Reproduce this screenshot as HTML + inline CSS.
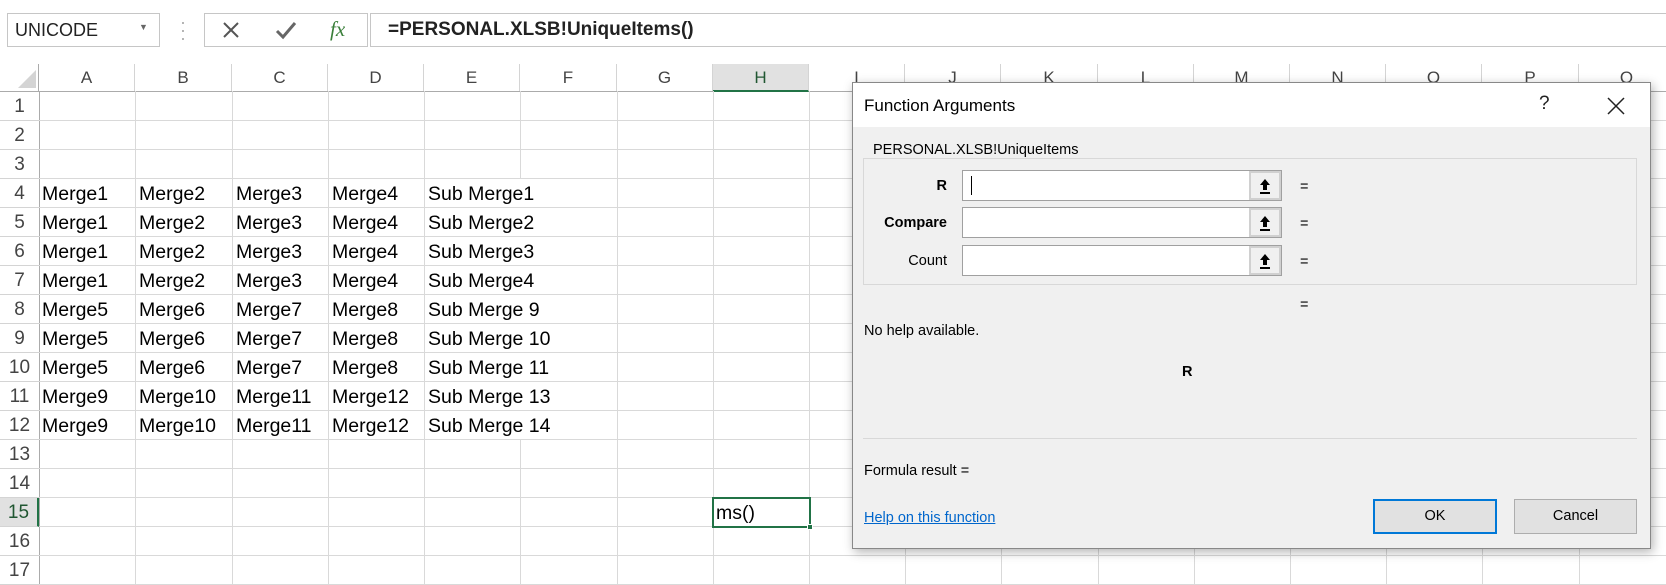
<!DOCTYPE html>
<html><head><meta charset="utf-8"><style>
*{margin:0;padding:0;box-sizing:border-box}
body{width:1666px;height:585px;overflow:hidden;background:#fff;font-family:"Liberation Sans",sans-serif;position:relative}
.a{position:absolute}
.ch{position:absolute;top:64px;height:27px;text-align:center;font-size:17px;color:#444;line-height:27px;border-right:1px solid #d4d4d4}
.rh{position:absolute;left:0;width:39px;text-align:center;font-size:19px;color:#444;border-bottom:1px solid #d4d4d4;line-height:29px}
.vl{position:absolute;top:91px;height:494px;width:1px;background:#d9d9d9}
.hl{position:absolute;left:39px;width:1627px;height:1px;background:#d9d9d9}
.c{position:absolute;font-size:19.5px;color:#000;line-height:30px;white-space:nowrap}
.d{font-size:14.5px;color:#000;white-space:nowrap}
.inp{position:absolute;left:962px;width:320px;height:31px;border:1px solid #a0a0a0;background:#fff}
.inp .b{position:absolute;right:0;top:0;width:32px;height:29px;background:#f0f0f0;border:2px solid #d0d0d0}
.inp svg{position:absolute;left:8px;top:5px}
</style></head><body>
<div class="a" style="left:7px;top:13px;width:153px;height:34px;border:1px solid #c6c6c6"></div>
<div class="a" style="left:15px;top:17px;font-size:18px;color:#222;line-height:26px">UNICODE</div>
<div class="a" style="left:139px;top:22px;font-size:9px;color:#666">▼</div>
<div class="a" style="left:180px;top:18px;font-size:18px;color:#aaa;line-height:8px">·<br>·<br>·</div>
<div class="a" style="left:204px;top:13px;width:164px;height:34px;border:1px solid #c6c6c6"></div>
<svg class="a" style="left:222px;top:21px" width="18" height="18"><path d="M2 2L16 16M16 2L2 16" stroke="#555" stroke-width="2"/></svg>
<svg class="a" style="left:275px;top:20px" width="22" height="20"><path d="M2 11 L8 17 L20 3" stroke="#666" stroke-width="3" fill="none"/></svg>
<div class="a" style="left:330px;top:14px;font-size:21px;color:#3a7f3a;font-style:italic;font-family:'Liberation Serif',serif;line-height:30px">fx</div>
<div class="a" style="left:370px;top:13px;width:1300px;height:34px;border:1px solid #c6c6c6"></div>
<div class="a" style="left:388px;top:17px;font-size:19px;color:#222;font-weight:bold;line-height:26px">=PERSONAL.XLSB!UniqueItems()</div>
<div class="a" style="left:0;top:64px;width:1666px;height:28px;border-bottom:1px solid #ababab"></div>
<div class="a" style="left:0;top:64px;width:39px;height:28px;border-right:1px solid #ababab"></div>
<svg class="a" style="left:18px;top:68px" width="18" height="20"><path d="M18 2 L18 20 L0 20Z" fill="#d4d4d4"/></svg>
<div class="ch" style="left:39px;width:96px">A</div>
<div class="ch" style="left:135px;width:97px">B</div>
<div class="ch" style="left:232px;width:96px">C</div>
<div class="ch" style="left:328px;width:96px">D</div>
<div class="ch" style="left:424px;width:96px">E</div>
<div class="ch" style="left:520px;width:97px">F</div>
<div class="ch" style="left:617px;width:96px">G</div>
<div class="ch" style="left:713px;width:96px;background:#e1e1e1;color:#215732;border-bottom:2px solid #217346;height:28px">H</div>
<div class="ch" style="left:809px;width:96px">I</div>
<div class="ch" style="left:905px;width:96px">J</div>
<div class="ch" style="left:1001px;width:97px">K</div>
<div class="ch" style="left:1098px;width:96px">L</div>
<div class="ch" style="left:1194px;width:96px">M</div>
<div class="ch" style="left:1290px;width:96px">N</div>
<div class="ch" style="left:1386px;width:96px">O</div>
<div class="ch" style="left:1482px;width:97px">P</div>
<div class="ch" style="left:1579px;width:96px">Q</div>
<div class="a" style="left:39px;top:92px;width:1px;height:493px;background:#ababab"></div>
<div class="vl" style="left:135px"></div><div class="vl" style="left:232px"></div><div class="vl" style="left:328px"></div><div class="vl" style="left:424px"></div><div class="vl" style="left:520px"></div><div class="vl" style="left:617px"></div><div class="vl" style="left:713px"></div><div class="vl" style="left:809px"></div><div class="vl" style="left:905px"></div><div class="vl" style="left:1001px"></div><div class="vl" style="left:1098px"></div><div class="vl" style="left:1194px"></div><div class="vl" style="left:1290px"></div><div class="vl" style="left:1386px"></div><div class="vl" style="left:1482px"></div><div class="vl" style="left:1579px"></div>
<div id="rows"></div>
<script>
var h='';for(var i=1;i<=17;i++){var t=92+(i-1)*29;
var st=i==15?'background:#e1e1e1;color:#215732;border-right:2px solid #217346;':'';
h+='<div class="rh" style="top:'+t+'px;height:29px;'+st+'">'+i+'</div>';
h+='<div class="hl" style="top:'+(t+28)+'px"></div>';}
var data=[[4,'Merge1','Merge2','Merge3','Merge4','Sub Merge1'],[5,'Merge1','Merge2','Merge3','Merge4','Sub Merge2'],[6,'Merge1','Merge2','Merge3','Merge4','Sub Merge3'],[7,'Merge1','Merge2','Merge3','Merge4','Sub Merge4'],[8,'Merge5','Merge6','Merge7','Merge8','Sub Merge 9'],[9,'Merge5','Merge6','Merge7','Merge8','Sub Merge 10'],[10,'Merge5','Merge6','Merge7','Merge8','Sub Merge 11'],[11,'Merge9','Merge10','Merge11','Merge12','Sub Merge 13'],[12,'Merge9','Merge10','Merge11','Merge12','Sub Merge 14']];
var xs=[42,139,236,332,428];
data.forEach(function(r){var t=92+(r[0]-1)*29;for(var j=0;j<4;j++){h+='<div class="c" style="left:'+xs[j]+'px;top:'+t+'px">'+r[j+1]+'</div>';}
h+='<div class="c" style="left:425px;top:'+t+'px;height:28px;width:191px;background:#fff;padding-left:3px">'+r[5]+'</div>';});
document.getElementById('rows').innerHTML=h;
</script>
<div class="a" style="left:712px;top:497px;width:99px;height:31px;border:2px solid #217346"></div>
<div class="c" style="left:716px;top:498px">ms()</div>
<div class="a" style="left:807px;top:524px;width:6px;height:6px;background:#217346;border:1px solid #fff"></div>
<div class="a" style="left:852px;top:82px;width:799px;height:467px;background:#f0f0f0;border:1px solid #888;box-shadow:2px 3px 10px rgba(0,0,0,.3)">
 <div class="a" style="left:0;top:0;width:797px;height:44px;background:#fff"></div>
 <div class="a" style="left:11px;top:13px;font-size:17px;color:#000">Function Arguments</div>
 <div class="a" style="left:686px;top:10px;font-size:19px;color:#222">?</div>
 <svg class="a" style="left:754px;top:14px" width="18" height="18"><path d="M1 1L17 17M17 1L1 17" stroke="#222" stroke-width="1.5"/></svg>
</div>
<div class="a" style="left:863px;top:158px;width:774px;height:127px;border:1px solid #d8d8d8"></div>
<div class="a d" style="left:872px;top:142px;background:#f0f0f0;padding:0 1px">PERSONAL.XLSB!UniqueItems</div>
<div class="a d" style="right:719px;top:178px;font-weight:bold">R</div>
<div class="a d" style="right:719px;top:215px;font-weight:bold">Compare</div>
<div class="a d" style="right:719px;top:253px">Count</div>
<div class="inp" style="top:170px"><div class="a" style="left:8px;top:5px;width:1px;height:19px;background:#000"></div><div class="b"><svg width="12" height="18"><path d="M6 1L11 7H8V12H4V7H1Z" fill="#000"/><path d="M1 15H11" stroke="#000" stroke-width="2"/></svg></div></div>
<div class="inp" style="top:207px"><div class="b"><svg width="12" height="18"><path d="M6 1L11 7H8V12H4V7H1Z" fill="#000"/><path d="M1 15H11" stroke="#000" stroke-width="2"/></svg></div></div>
<div class="inp" style="top:245px"><div class="b"><svg width="12" height="18"><path d="M6 1L11 7H8V12H4V7H1Z" fill="#000"/><path d="M1 15H11" stroke="#000" stroke-width="2"/></svg></div></div>
<div class="a d" style="left:1300px;top:179px">=</div>
<div class="a d" style="left:1300px;top:216px">=</div>
<div class="a d" style="left:1300px;top:254px">=</div>
<div class="a d" style="left:1300px;top:297px">=</div>
<div class="a d" style="left:864px;top:323px">No help available.</div>
<div class="a d" style="left:1182px;top:364px;font-weight:bold">R</div>
<div class="a" style="left:863px;top:438px;width:774px;height:1px;background:#d8d8d8"></div>
<div class="a d" style="left:864px;top:463px">Formula result =</div>
<div class="a d" style="left:864px;top:510px;color:#0066cc;text-decoration:underline">Help on this function</div>
<div class="a d" style="left:1373px;top:499px;width:124px;height:35px;background:#e1e1e1;border:2px solid #0078d7;text-align:center;line-height:31px">OK</div>
<div class="a d" style="left:1514px;top:499px;width:123px;height:35px;background:#e1e1e1;border:1px solid #adadad;text-align:center;line-height:33px">Cancel</div>
</body></html>
